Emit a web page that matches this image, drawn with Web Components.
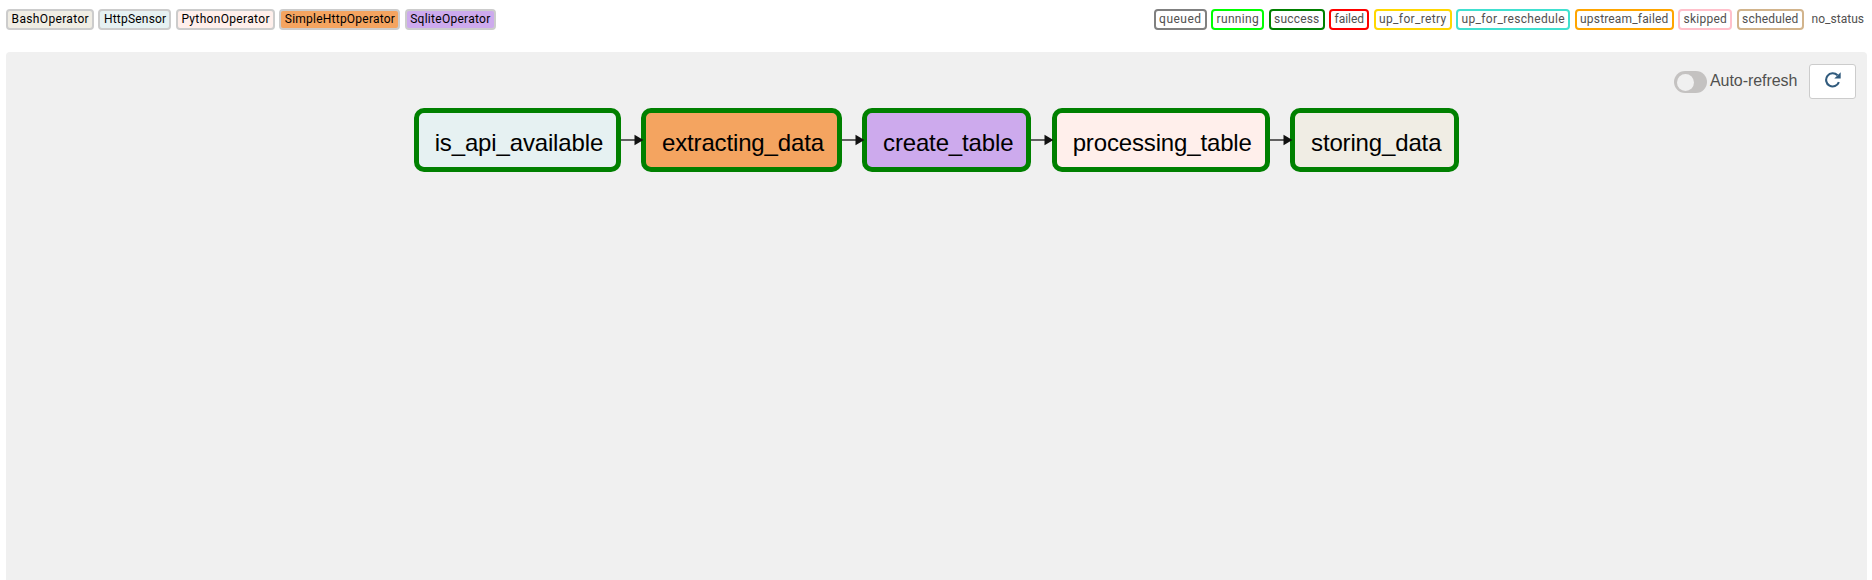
<!DOCTYPE html>
<html lang="en">
<head>
<meta charset="utf-8">
<title>DAG graph view</title>
<style>
html,body{margin:0;height:100%;background:#fff;font-family:"Liberation Sans",Arial,sans-serif;overflow:hidden}
</style>
</head>
<body>
<dag-page></dag-page>
<script>
class LegendChip extends HTMLElement {
  connectedCallback() {
    this.attachShadow({mode: 'open'}).innerHTML = `<style>
      :host{display:block;box-sizing:border-box;height:21px;width:${this.getAttribute('w')}px;
        border:2px solid ${this.getAttribute('line')};border-radius:4px;background:${this.getAttribute('fill') || '#fff'};
        color:${this.getAttribute('ink') || '#51504f'};font:12px/16px Roboto,"Liberation Sans",sans-serif;
        padding-left:3.6px;white-space:nowrap}
      span{display:inline-block}
    </style><span><slot></slot></span>`;
    // Spread the label so that it fills the chip between its side paddings.
    const label = this.shadowRoot.querySelector('span');
    const room = Number(this.getAttribute('w')) - 10.6 - label.getBoundingClientRect().width;
    label.style.letterSpacing = (room / this.textContent.length).toFixed(3) + 'px';
  }
}
class TaskNode extends HTMLElement {
  connectedCallback() {
    this.attachShadow({mode: 'open'}).innerHTML = `<style>
      :host{display:block;flex:none;box-sizing:border-box;width:${this.getAttribute('w')}px;height:64px;border:5px solid #008000;
        border-radius:10px;background:${this.getAttribute('fill')};color:#000;font-size:24px;line-height:27px;padding:16px 0 0 2.6px;
        text-align:center;white-space:nowrap}
      span{display:inline-block;letter-spacing:-.15px}
    </style><span><slot></slot></span>`;
  }
}
class TaskEdge extends HTMLElement {
  connectedCallback() {
    this.attachShadow({mode: 'open'}).innerHTML = `<style>
      :host{display:block;flex:none;width:${this.getAttribute('w')}px;height:12px;position:relative;z-index:1}
      svg{display:block;overflow:visible}
    </style><svg width="21" height="12"><path d="M0 6H14" stroke="#333" stroke-width="1.5"/><path d="M13.5 .8L22.4 6L13.5 11.2Z" fill="#111"/></svg>`;
  }
}
class AutoRefresh extends HTMLElement {
  connectedCallback() {
    this.attachShadow({mode: 'open'}).innerHTML = `<style>
      :host{display:flex;align-items:flex-start;color:#51504f}
      .track{box-sizing:border-box;width:33px;height:22px;border-radius:11px;background:#c4c2c1;padding:2.5px 3px;margin-top:7px}
      .knob{width:17px;height:17px;border-radius:50%;background:#f0f0f0}
      label{font-size:16px;line-height:18px;margin:8px 0 0 3px;width:99px;letter-spacing:-.06px}
      button{box-sizing:border-box;width:47px;height:35px;padding:0;border:1px solid #ccc;border-radius:3px;background:#fff;
        display:flex;align-items:flex-start}
      svg{display:block;margin:6.6px 0 0 14.5px}
    </style><div class="track"><div class="knob"></div></div><label>Auto-refresh</label>
    <button aria-label="Refresh"><svg width="16" height="16" viewBox="0 0 16 16"><path d="M13.9 10.2A6.6 6.6 0 1 1 12.5 3.3" fill="none" stroke="#315b7d" stroke-width="2.1"/><path d="M15.7 .2V6.6H9.3Z" fill="#315b7d"/></svg></button>`;
  }
}
class DagPage extends HTMLElement {
  connectedCallback() {
    this.attachShadow({mode: 'open'}).innerHTML = `<style>
      :host{display:flex;flex-direction:column;height:100vh;box-sizing:border-box;padding:9px 5px 0 6px}
      .legend{display:flex;justify-content:space-between;height:43px;flex:none}
      .group{display:flex;gap:4.4px}
      .group + .group{gap:4.5px}
      .panel{flex:1;background:#f0f0f0;border-radius:4px 4px 0 0;padding:12px 11px 0 0}
      .tools{display:flex;justify-content:flex-end;height:44px}
      .flow{display:flex;align-items:center;padding-left:408.1px}
      .plain{margin-right:-4px;padding-left:1.6px}
    </style>
    <div class="legend">
      <div class="group">
        <legend-chip w="88" line="#ccc" ink="#000" fill="#f0ede4">BashOperator</legend-chip>
        <legend-chip w="73" line="#ccc" ink="#000" fill="#e6f1f2">HttpSensor</legend-chip>
        <legend-chip w="99" line="#ccc" ink="#000" fill="#ffefeb">PythonOperator</legend-chip>
        <legend-chip w="121" line="#ccc" ink="#000" fill="#f4a460">SimpleHttpOperator</legend-chip>
        <legend-chip w="91" line="#ccc" ink="#000" fill="#cdaaed">SqliteOperator</legend-chip>
      </div>
      <div class="group">
        <legend-chip w="53" line="#808080">queued</legend-chip>
        <legend-chip w="53" line="#00ff00">running</legend-chip>
        <legend-chip w="56" line="#008000">success</legend-chip>
        <legend-chip w="40" line="#ff0000">failed</legend-chip>
        <legend-chip w="78" line="#ffd700">up_for_retry</legend-chip>
        <legend-chip w="114" line="#40e0d0">up_for_reschedule</legend-chip>
        <legend-chip w="99" line="#ffa500">upstream_failed</legend-chip>
        <legend-chip w="54" line="#ffc0cb">skipped</legend-chip>
        <legend-chip w="67" line="#d2b48c">scheduled</legend-chip>
        <legend-chip class="plain" w="63" line="transparent">no_status</legend-chip>
      </div>
    </div>
    <div class="panel">
      <div class="tools"><auto-refresh></auto-refresh></div>
      <div class="flow">
        <task-node w="207" fill="#e6f1f2">is_api_available</task-node><task-edge w="20.3"></task-edge>
        <task-node w="200.5" fill="#f4a460">extracting_data</task-node><task-edge w="20.5"></task-edge>
        <task-node w="169" fill="#cdaaed">create_table</task-node><task-edge w="20.5"></task-edge>
        <task-node w="218" fill="#ffefeb">processing_table</task-node><task-edge w="20.5"></task-edge>
        <task-node w="169" fill="#f0ede4">storing_data</task-node>
      </div>
    </div>`;
  }
}
customElements.define('legend-chip', LegendChip);
customElements.define('task-node', TaskNode);
customElements.define('task-edge', TaskEdge);
customElements.define('auto-refresh', AutoRefresh);
customElements.define('dag-page', DagPage);
</script>
</body>
</html>
